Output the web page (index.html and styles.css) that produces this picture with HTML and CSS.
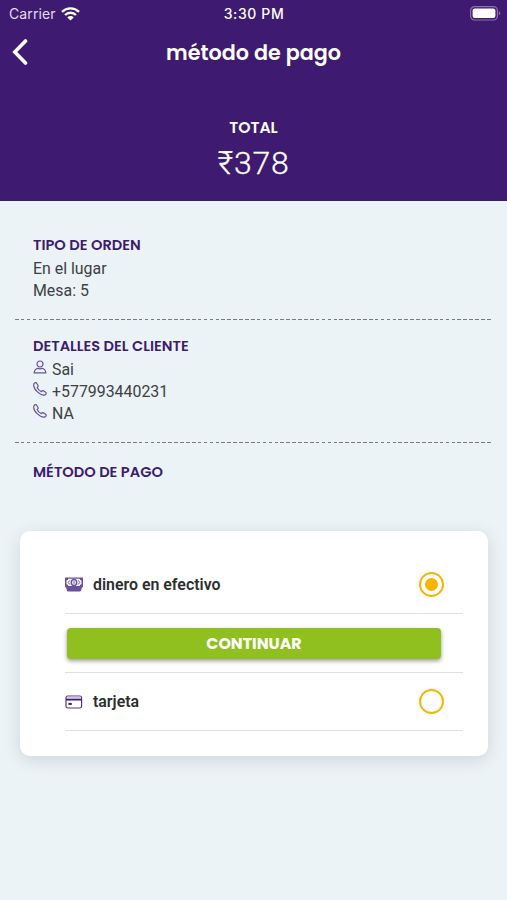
FILE: index.html
```
<!DOCTYPE html>
<html lang="es">
<head>
  <meta charset="UTF-8">
  <meta name="viewport" content="width=device-width, initial-scale=1.0">
  <title>método de pago</title>
  <link rel="stylesheet" href="styles.css">
</head>
<body>
  <header class="header">
    <div class="status">
      <div class="carrier">
        <span>Carrier</span>
        <svg width="19" height="14" viewBox="0 0 19 14" fill="none" stroke="#fff" stroke-width="2.4">
          <path d="M1 4.8a12.2 12.2 0 0 1 17 0"/>
          <path d="M4 8a8 8 0 0 1 11 0"/>
          <path d="M9.5 13.6 6.3 10.4a4.6 4.6 0 0 1 6.4 0z" fill="#fff" stroke="none"/>
        </svg>
      </div>
      <span class="time">3:30 PM</span>
      <svg class="battery" width="31" height="15" viewBox="0 0 31 15">
        <rect x=".6" y=".6" width="26.8" height="13.4" rx="4" fill="none" stroke="#8a73ab" stroke-width="1.2"/>
        <rect x="2.6" y="2.6" width="22.8" height="9.4" rx="2" fill="#fff"/>
        <path d="M28.8 5a2.6 2.6 0 0 1 0 4.6z" fill="#8a73ab"/>
      </svg>
    </div>
    <div class="navbar">
      <button class="back" aria-label="Atrás">
        <svg width="16" height="26" viewBox="0 0 16 26" fill="none" stroke="#fff" stroke-width="3.6">
          <path d="M13.5 2 2.8 13l10.7 11" stroke-linecap="round"/>
        </svg>
      </button>
      <h1>método de pago</h1>
    </div>
    <div class="total">
      <span class="total-label">TOTAL</span>
      <span class="total-value">₹378</span>
    </div>
  </header>

  <main>
    <section class="info">
      <h2>TIPO DE ORDEN</h2>
      <p>En el lugar</p>
      <p>Mesa: 5</p>
    </section>
    <div class="dashed"></div>
    <section class="info client">
      <h2>DETALLES DEL CLIENTE</h2>
      <p>
        <svg class="ico" viewBox="0 0 14 14"><circle cx="7" cy="4" r="3"/><path d="M1.2 12.8c0-2.5 1.5-3.9 3.7-4.6.9.8 3.3.8 4.2 0 2.2.7 3.7 2.1 3.7 4.6z"/></svg>
        Sai
      </p>
      <p>
        <svg class="ico" viewBox="0 0 14 14"><path d="M1 1.8C2 .3 3.3.3 4 1.7l1 1.8c.4.9-.1 1.4-.8 2 .6 1.6 2.4 3.4 4.2 4.1.6-.8 1.2-1.1 2-.7l1.9 1.1c1.3.8 1.2 1.8-.2 2.9C7.5 14.2-.8 6.6 1 1.8z"/></svg>
        +577993440231
      </p>
      <p>
        <svg class="ico" viewBox="0 0 14 14"><path d="M1 1.8C2 .3 3.3.3 4 1.7l1 1.8c.4.9-.1 1.4-.8 2 .6 1.6 2.4 3.4 4.2 4.1.6-.8 1.2-1.1 2-.7l1.9 1.1c1.3.8 1.2 1.8-.2 2.9C7.5 14.2-.8 6.6 1 1.8z"/></svg>
        NA
      </p>
    </section>
    <div class="dashed"></div>
    <section class="info method">
      <h2>MÉTODO DE PAGO</h2>
    </section>

    <div class="card">
      <label class="option">
        <svg width="18" height="15" viewBox="0 0 18 15">
          <path d="M0 .5h18v9.7h-1l-1 3.5q-.3.8-1 .8H3q-.7 0-1-.8l-1-3.5H0z" fill="#6a51a0"/>
          <path d="M3.5 1.7h11q.3 1.5 2 1.8v3.8q-1.7.3-2 1.8h-11q-.3-1.5-2-1.8V3.5q1.7-.3 2-1.8z" fill="#fff"/>
          <ellipse cx="9" cy="5.4" rx="2.7" ry="3" fill="#fff" stroke="#6a51a0" stroke-width="1.5"/>
          <path d="M9 4v2.8M4.8 3.3 3.2 5.4l1.6 2.1M13.2 3.3l1.6 2.1-1.6 2.1" fill="none" stroke="#6a51a0"/>
        </svg>
        <span class="name">dinero en efectivo</span>
        <span class="radio checked"></span>
      </label>
      <div class="pay">
        <button class="continue">CONTINUAR</button>
      </div>
      <label class="option last">
        <svg width="18" height="14" viewBox="0 0 18 14">
          <rect x="1" y="1" width="15.6" height="12" rx="1.8" fill="#fff" stroke="#54388f" stroke-width="1.2"/>
          <path d="M1.7 2.5h14.2" stroke="#cfc5e2" stroke-width="1.6"/>
          <path d="M1 4.6h15.6" stroke="#3e1a70" stroke-width="1.8"/>
          <path d="M3.4 8.9h3.4" stroke="#3e1a70" stroke-width="2"/>
        </svg>
        <span class="name">tarjeta</span>
        <span class="radio"></span>
      </label>
    </div>
  </main>
</body>
</html>
```
FILE: styles.css
```
* {
  box-sizing: border-box;
}
body {
  margin: 0;
  min-height: 900px;
  background-color: #ebf3f6;
  font-family: Roboto, sans-serif;
  font-size: 15.9px;
  color: #3d4043;
}
h1, h2, p {
  margin: 0;
}
svg {
  display: block;
  flex-shrink: 0;
}
.header {
  height: 201px;
  background-color: #3e1a70;
  color: #fff;
}
.status {
  display: grid;
  grid-template-columns: 1fr auto 1fr;
  align-items: center;
  height: 27px;
  padding: 0 6px 0 9px;
  font-family: Inter, sans-serif;
  font-size: 14px;
}
.carrier {
  display: flex;
  align-items: center;
  gap: 5px;
  color: #e4dcef;
  letter-spacing: 0.1px;
}
.time {
  margin-right: 2px;
  font-weight: 500;
  letter-spacing: 0.6px;
}
.battery {
  justify-self: end;
}
.navbar {
  display: grid;
  grid-template-columns: 40px 1fr 40px;
  align-items: center;
  height: 50px;
}
.back {
  padding: 0 0 0 12px;
  border: none;
  background: none;
  cursor: pointer;
}
h1 {
  font-family: Poppins, sans-serif;
  font-size: 20.7px;
  font-weight: 600;
  text-align: center;
  white-space: nowrap;
}
.total {
  display: flex;
  flex-direction: column;
  align-items: center;
  padding-top: 41px;
}
.total-label {
  font-family: Poppins, sans-serif;
  font-size: 15.6px;
  font-weight: 600;
  line-height: 20px;
}
.total-value {
  margin-top: 6px;
  font-size: 32px;
  font-weight: 300;
  line-height: 38px;
  letter-spacing: 0.8px;
  -webkit-text-stroke: 0.3px #fff;
}
.info {
  padding: 33px 33px 0;
}
.info h2 {
  margin-bottom: 2px;
  font-family: Poppins, sans-serif;
  font-size: 14.6px;
  font-weight: 600;
  line-height: 22px;
  color: #3e1a70;
}
.info p {
  display: flex;
  gap: 5px;
  line-height: 22px;
}
.ico {
  width: 14px;
  height: 14px;
  margin-top: 1px;
  fill: none;
  stroke: #6a51a0;
  stroke-width: 1.2;
}
.dashed {
  height: 1px;
  margin: 17px 14px 0 15px;
  background: repeating-linear-gradient(90deg, #777b7f 0 3.6px, transparent 3.6px 5.9px);
}
.client {
  padding-top: 15px;
}
.method {
  padding-top: 18px;
}
.card {
  height: 225px;
  margin: 48px 19px 0 20px;
  padding: 24px 25px 0 45px;
  border-radius: 10px;
  background-color: #fff;
  box-shadow: 0 4px 18px rgba(0, 0, 0, 0.12);
}
.option {
  display: flex;
  align-items: center;
  height: 59px;
  padding-right: 19px;
  border-bottom: 1px solid #e0e0e0;
}
.name {
  flex: 1;
  margin-left: 10px;
  font-weight: 600;
  color: #2e2e2e;
}
.radio {
  display: flex;
  align-items: center;
  justify-content: center;
  width: 25px;
  height: 25px;
  border: 2px solid #f7b500;
  border-radius: 50%;
}
.checked::after {
  content: "";
  width: 13px;
  height: 13px;
  border-radius: 50%;
  background-color: #f7b500;
}
.pay {
  height: 59px;
  padding: 14px 22px 0 2px;
  border-bottom: 1px solid #e0e0e0;
}
.continue {
  display: block;
  width: 100%;
  height: 31px;
  padding: 0;
  border: none;
  border-radius: 4px;
  background-color: #90c01f;
  box-shadow: 0 2px 4px rgba(0, 0, 0, 0.4);
  color: #fff;
  font-family: Poppins, sans-serif;
  font-size: 15.8px;
  font-weight: 700;
  cursor: pointer;
}
.last {
  height: 58px;
}
```
